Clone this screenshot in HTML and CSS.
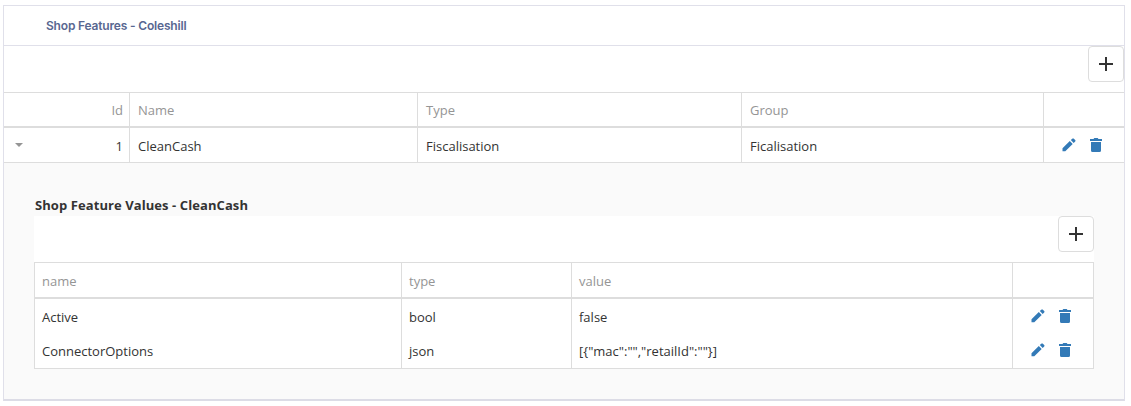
FILE: index.html
```
<!DOCTYPE html>
<html>
  <head>
    <meta charset="utf-8" />
    <title>Shop Features</title>
    <link rel="stylesheet" href="styles.css">
  </head>
  <body>
    <svg width="0" height="0" class="icons">
      <symbol id="edit" viewBox="0 0 14 14">
        <path d="M0.500 10.300 7.800 3l2.900 2.900-7.400 7.400H0.500zM8.800 2.100 10.300.7q.7-.7 1.500 0l1.400 1.400q.7.7 0 1.400L11.700 5z" />
      </symbol>
      <symbol id="trash" viewBox="0 0 12 14">
        <path d="M0 1h3.500l.8-1h3.400l.8 1H12v2H0zM1 4h10v8.500q0 1.500-1.500 1.500h-7Q1 14 1 12.500z" />
      </symbol>
      <symbol id="plus" viewBox="0 0 14 14">
        <path d="M6 0h2v6h6v2H8v6H6V8H0V6h6z" />
      </symbol>
    </svg>

    <div class="card">
      <div class="card-header"><h3>Shop Features - Coleshill</h3></div>
      <div class="toolbar">
        <button class="add"><svg><use href="#plus" /></svg></button>
      </div>
      <table class="grid features" cellpadding="0" cellspacing="0">
        <colgroup>
          <col class="c-expand" /><col class="c-id" /><col class="c-name" />
          <col class="c-type" /><col class="c-group" /><col />
        </colgroup>
        <tr class="heading">
          <td></td>
          <td class="num">Id</td>
          <td>Name</td>
          <td>Type</td>
          <td>Group</td>
          <td></td>
        </tr>
        <tr class="item">
          <td><div class="caret"></div></td>
          <td class="num">1</td>
          <td>CleanCash</td>
          <td>Fiscalisation</td>
          <td>Ficalisation</td>
          <td>
            <div class="actions">
              <svg class="edit"><use href="#edit" /></svg>
              <svg class="trash"><use href="#trash" /></svg>
            </div>
          </td>
        </tr>
      </table>

      <div class="detail">
        <h4>Shop Feature Values - CleanCash</h4>
        <div class="toolbar">
          <button class="add"><svg><use href="#plus" /></svg></button>
        </div>
        <table class="grid values" cellpadding="0" cellspacing="0">
          <colgroup>
            <col class="v-name" /><col class="v-type" /><col class="v-value" /><col />
          </colgroup>
          <tr class="heading">
            <td>name</td>
            <td>type</td>
            <td>value</td>
            <td></td>
          </tr>
          <tr class="item">
            <td>Active</td>
            <td>bool</td>
            <td>false</td>
            <td>
              <div class="actions">
                <svg class="edit"><use href="#edit" /></svg>
                <svg class="trash"><use href="#trash" /></svg>
              </div>
            </td>
          </tr>
          <tr class="item">
            <td>ConnectorOptions</td>
            <td>json</td>
            <td>[{"mac":"","retailId":""}]</td>
            <td>
              <div class="actions">
                <svg class="edit"><use href="#edit" /></svg>
                <svg class="trash"><use href="#trash" /></svg>
              </div>
            </td>
          </tr>
        </table>
      </div>
    </div>
  </body>
</html>
```
FILE: styles.css
```
* {
  box-sizing: border-box;
  margin: 0;
  padding: 0;
}

body {
  padding: 5px 6px 0 3px;
  background: #fff;
  font-family: "Open Sans", "Noto Sans", sans-serif;
  font-size: 13px;
  line-height: 18px;
  color: #333;
}

.icons {
  display: none;
}

.card {
  height: 396px;
  border: 1px solid #e0e0ea;
  border-bottom: 2px solid #dcdce6;
}

.card-header {
  height: 40px;
  padding: 11px 42px;
  border-bottom: 1px solid #e0e0ea;
}

.card-header h3 {
  font-family: Inter, sans-serif;
  font-size: 12px;
  font-weight: 600;
  letter-spacing: -0.18px;
  color: #596791;
}

.toolbar {
  display: flex;
  justify-content: flex-end;
  height: 46px;
  background: #fff;
}

.add {
  display: flex;
  align-items: center;
  justify-content: center;
  width: 36px;
  height: 36px;
  padding-right: 1px;
  border: 1px solid #ddd;
  border-radius: 4px;
  background: #fff;
}

.add svg {
  width: 14px;
  height: 14px;
  fill: #333;
}

.grid {
  width: 100%;
  table-layout: fixed;
  background: #fff;
  border-top: 1px solid #ddd;
  border-bottom: 1px solid #ddd;
}

.grid td {
  height: 34px;
  padding: 0 7px;
  white-space: nowrap;
  border-left: 1px solid #ddd;
}

.grid .heading td {
  height: 36px;
  color: #959595;
  border-bottom: 2px solid #ddd;
}

.features .heading td {
  height: 35px;
}

.features td {
  padding-left: 8px;
  padding-right: 6px;
}

.features td:nth-child(-n + 2) {
  border-left: none;
}

.grid .item td {
  padding-top: 2px;
}

.grid .item td:last-child,
.features .item td:first-child {
  padding-top: 0;
  padding-left: 7px;
}

.values .heading td {
  padding-top: 2px;
}

.grid .num {
  text-align: right;
}

.c-expand {
  width: 30px;
}

.c-id {
  width: 95px;
}

.c-name {
  width: 288px;
}

.c-type {
  width: 324px;
}

.c-group {
  width: 302px;
}

.caret {
  width: 8px;
  margin-left: 4px;
  border: 4px solid transparent;
  border-top-color: #959595;
  border-bottom: none;
}

.actions {
  display: flex;
  align-items: center;
  gap: 14px;
  padding-left: 11px;
  fill: #337ab7;
}

.edit {
  width: 14px;
  height: 14px;
}

.trash {
  width: 12px;
  height: 14px;
}

.detail {
  height: 236px;
  padding: 32px 30px 0;
  background: #fafafa;
}

.detail h4 {
  height: 21px;
  padding-left: 1px;
  font-size: 13px;
  font-weight: 700;
  line-height: 20px;
  letter-spacing: 0.08px;
}

.values {
  border-right: 1px solid #ddd;
}

.values .item:last-child td {
  height: 35px;
  padding-bottom: 1px;
}

.values .item:last-child td:last-child {
  padding-bottom: 2px;
}

.v-name {
  width: 367px;
}

.v-type {
  width: 170px;
}

.v-value {
  width: 441px;
}
```
